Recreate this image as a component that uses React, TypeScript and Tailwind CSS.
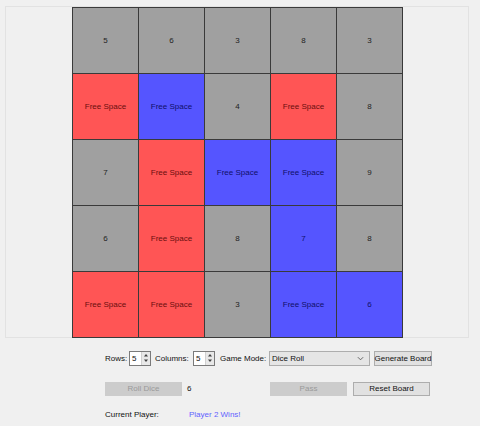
const R = "bg-[#ff5555] text-[#6a0f0f]";
const B = "bg-[#5555ff] text-[#10106a]";
const G = "bg-[#a0a0a0] text-[#222222]";

type Cell = { label: string; tone: string };

const board: Cell[][] = [
  [{ label: "5", tone: G }, { label: "6", tone: G }, { label: "3", tone: G }, { label: "8", tone: G }, { label: "3", tone: G }],
  [{ label: "Free Space", tone: R }, { label: "Free Space", tone: B }, { label: "4", tone: G }, { label: "Free Space", tone: R }, { label: "8", tone: G }],
  [{ label: "7", tone: G }, { label: "Free Space", tone: R }, { label: "Free Space", tone: B }, { label: "Free Space", tone: B }, { label: "9", tone: G }],
  [{ label: "6", tone: G }, { label: "Free Space", tone: R }, { label: "8", tone: G }, { label: "7", tone: B }, { label: "8", tone: G }],
  [{ label: "Free Space", tone: R }, { label: "Free Space", tone: R }, { label: "3", tone: G }, { label: "Free Space", tone: B }, { label: "6", tone: B }],
];

function SpinBox({ value }: { value: string }) {
  return (
    <div className="flex h-[15px] w-[22px] shrink-0 items-stretch border border-[#7a7a7a] bg-white">
      <span className="flex-1 pl-[2px] leading-[13px]">{value}</span>
      <div className="flex w-[9px] flex-col border-l border-[#d0d0d0] bg-[#e8e8e8]">
        <svg viewBox="0 0 8 6" className="h-[6px] w-[8px]"><path d="M2 4.5 L4 2 L6 4.5 Z" fill="#404040" /></svg>
        <svg viewBox="0 0 8 6" className="h-[6px] w-[8px]"><path d="M2 1.5 L4 4 L6 1.5 Z" fill="#404040" /></svg>
      </div>
    </div>
  );
}

export default function App() {
  return (
    <div
      className="h-[426px] w-[480px] overflow-hidden whitespace-nowrap bg-[#f0f0f0] text-[8px] text-[#111111]"
      style={{ fontFamily: '"Liberation Sans", Arial, sans-serif' }}
    >
      <div className="ml-[5px] mt-[6px] h-[332px] w-[464px] border border-[#e2e2e2] bg-[#f0f0f0]">
        <div className="ml-[66px] grid w-[331px] grid-cols-[repeat(5,65px)] gap-px bg-[#3a3a3a] p-px">
          {board.flat().map((c, i) => (
            <div key={i} className={`flex h-[65px] items-center justify-center ${c.tone}`}>
              {c.label}
            </div>
          ))}
        </div>
      </div>

      <div className="mt-[13px] flex h-[15px] items-center pl-[105px]">
        <span className="w-[24px] shrink-0">Rows:</span>
        <SpinBox value="5" />
        <span className="ml-[4px] w-[38px] shrink-0">Columns:</span>
        <SpinBox value="5" />
        <span className="ml-[5px] w-[49px] shrink-0">Game Mode:</span>
        <div className="flex h-[15px] w-[101px] shrink-0 items-center justify-between border border-[#adadad] bg-[#e5e5e5] pl-[2px] pr-[5px]">
          <span>Dice Roll</span>
          <svg viewBox="0 0 8 5" className="h-[5px] w-[7px]"><path d="M1 1 L4 4 L7 1" fill="none" stroke="#555" strokeWidth="1" /></svg>
        </div>
        <button className="ml-[4px] flex h-[15px] w-[58px] shrink-0 items-center justify-center border border-[#adadad] bg-[#e1e1e1]">
          Generate Board
        </button>
      </div>

      <div className="mt-[16px] flex h-[14px] items-center pl-[105px]">
        <button className="flex h-[14px] w-[77px] shrink-0 items-center justify-center bg-[#cccccc] text-[#9a9a9a]">Roll Dice</button>
        <span className="ml-[5px] w-[83px] shrink-0">6</span>
        <button className="flex h-[14px] w-[77px] shrink-0 items-center justify-center bg-[#cccccc] text-[#9a9a9a]">Pass</button>
        <button className="ml-[6px] flex h-[14px] w-[77px] shrink-0 items-center justify-center border border-[#adadad] bg-[#e1e1e1]">
          Reset Board
        </button>
      </div>

      <div className="mt-[12px] flex h-[14px] items-center pl-[105px]">
        <span className="w-[84px] shrink-0">Current Player:</span>
        <span className="text-[#6262ff]">Player 2 Wins!</span>
      </div>
    </div>
  );
}
